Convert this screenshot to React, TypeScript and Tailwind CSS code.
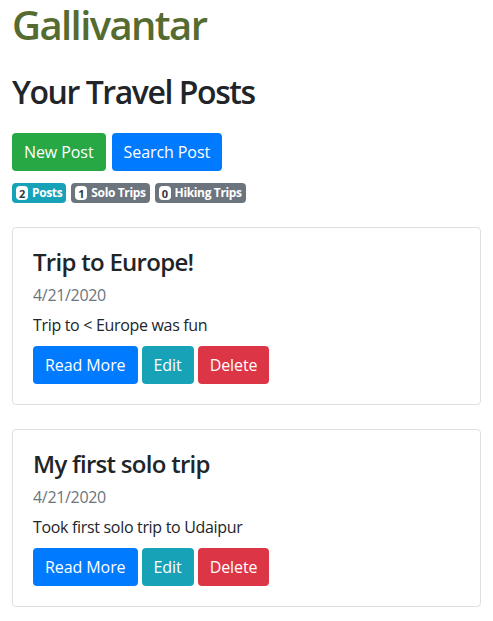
import React from "react"

type Post = { id: number; title: string; date: string; body: string }

const posts: Post[] = [
  { id: 1, title: "Trip to Europe!", date: "4/21/2020", body: "Trip to < Europe was fun" },
  { id: 2, title: "My first solo trip", date: "4/21/2020", body: "Took first solo trip to Udaipur" },
]

const Badge: React.FC<{ count: number; label: string; color: string }> = ({ count, label, color }) => (
  <span className={`inline-flex h-[20px] items-center gap-[4px] rounded-[4px] px-[4px] text-[12px] font-bold tracking-[-0.03em] text-white ${color}`}>
    <span className="inline-flex h-[14px] min-w-[12px] items-center justify-center rounded-[4px] bg-white px-[3px] text-[11px] leading-none text-[#343a40]">
      {count}
    </span>
    {label}
  </span>
)

const btn = "h-[38px] rounded-[4px] px-[12px] tracking-[-0.005em] text-white"

const App: React.FC = () => {
  return (
    <div
      className="min-h-screen bg-white px-[12px] text-[16px] leading-[1.5] tracking-[-0.02em] text-[#212529]"
      style={{ fontFamily: '"Open Sans", "Noto Sans", sans-serif' }}
    >
      {/* Header */}
      <h1 className="text-[40px] leading-[1.25] font-semibold tracking-[-0.04em] text-[#556b2f]">Gallivantar</h1>
      <h2 className="mt-[23px] text-[32px] leading-[1.2] font-semibold tracking-[-0.045em]">Your Travel Posts</h2>

      <div className="mt-[22px] flex gap-[6px]">
        <button className={`${btn} bg-[#28a745]`}>New Post</button>
        <button className={`${btn} bg-[#007bff]`}>Search Post</button>
      </div>

      <div className="mt-[12px] flex gap-[5px]">
        <Badge count={2} label="Posts" color="bg-[#17a2b8]" />
        <Badge count={1} label="Solo Trips" color="bg-[#6c757d]" />
        <Badge count={0} label="Hiking Trips" color="bg-[#6c757d]" />
      </div>

      {/* Posts */}
      <div className="mt-[24px] flex flex-col gap-[24px] pb-[14px]">
        {posts.map((post) => (
          <div key={post.id} className="rounded-[4px] border border-[#dfdfdf] p-[20px]">
            <h4 className="text-[24px] leading-[1.2] font-semibold tracking-[-0.03em]">{post.title}</h4>
            <div className="mt-[6px] text-[#6c757d]">{post.date}</div>
            <p className="mt-[6px]">{post.body}</p>
            <div className="mt-[9px] flex gap-[4px]">
              <button className={`${btn} bg-[#007bff]`}>Read More</button>
              <button className={`${btn} bg-[#17a2b8]`}>Edit</button>
              <button className={`${btn} bg-[#dc3545]`}>Delete</button>
            </div>
          </div>
        ))}
      </div>
    </div>
  )
}

export default App
